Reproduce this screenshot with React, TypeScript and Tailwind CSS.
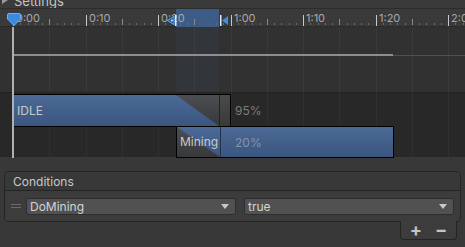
import React from "react";

const X0 = 13;
const MAJOR = 72.5;
const labels = ["0:00", "0:10", "0:20", "1:00", "1:10", "1:20", "2:00"];

function Ruler() {
  const ticks: { x: number; h: number; c: string }[] = [];
  for (let i = 0; i <= 64; i++) {
    const x = X0 + i * (MAJOR / 10);
    if (x > 465) break;
    if (i % 10 === 0) continue;
    if (i % 5 === 0) ticks.push({ x, h: 6, c: "#8a8a8a" });
    else ticks.push({ x, h: 2, c: "#6a6a6a" });
  }
  return (
    <div className="relative h-[18px] bg-[#3a3a3a] border-b border-[#2a2a2a]">
      <div className="absolute left-[176px] w-[43px] top-0 h-[18px] bg-[#3d5b87]" />
      {ticks.map((t, i) => (
        <div
          key={i}
          className="absolute w-px"
          style={{ left: Math.round(t.x), bottom: 1, height: t.h, background: t.c }}
        />
      ))}
      {labels.map((l, i) => {
        const x = Math.round(X0 + i * MAJOR);
        return (
          <div key={l} className="absolute top-[2px] h-[15px] flex items-end gap-[2px]" style={{ left: x }}>
            <div className="w-px h-[11px] bg-[#c8c8c8]" />
            <span className="text-[11px] leading-[14px] text-[#a8a8a8] self-start">{l}</span>
          </div>
        );
      })}
      {/* left marker */}
      <svg className="absolute left-[165px] top-[6px]" width="13" height="11" viewBox="0 0 13 11">
        <path d="M2.5 5.5 L9 1.5 L9 9.5 Z" fill="#1f3f66" stroke="#4aa0ff" strokeWidth="1.2" />
        <circle cx="7" cy="5.5" r="1.2" fill="#9fd0ff" />
        <rect x="10" y="0" width="1.5" height="11" fill="#d8e6f5" />
      </svg>
      {/* right marker */}
      <svg className="absolute left-[219px] top-[6px]" width="10" height="11" viewBox="0 0 10 11">
        <rect x="1" y="0" width="1.5" height="11" fill="#dfe9f5" />
        <path d="M3 5.5 L9 1 L9 10 Z" fill="#3a8ee6" />
      </svg>
      {/* playhead head */}
      <svg className="absolute left-[7px] top-[4px]" width="14" height="13" viewBox="0 0 14 13">
        <path
          d="M2 0.5 H12 Q13.5 0.5 13.5 2 V6 L7 12.5 L0.5 6 V2 Q0.5 0.5 2 0.5 Z"
          fill="#3a8ae2"
          stroke="#6cb1ff"
          strokeWidth="1"
        />
      </svg>
    </div>
  );
}

function GridLines({ color }: { color: string }) {
  const xs: number[] = [];
  for (let k = 1; k < 14; k++) {
    const x = X0 + k * (MAJOR / 2);
    if (x < 465) xs.push(Math.round(x));
  }
  return (
    <>
      {xs.map((x) => (
        <div key={x} className="absolute top-0 bottom-0 w-px" style={{ left: x, background: color }} />
      ))}
    </>
  );
}

function Diagonal({ id, down }: { id: string; down: boolean }) {
  return (
    <svg className="shrink-0 self-stretch" width="43" height="100%" viewBox="0 0 43 31" preserveAspectRatio="none">
      <defs>
        <linearGradient id={id + "b"} x1="0" y1="0" x2="0" y2="1">
          <stop offset="0" stopColor="#4b6a95" />
          <stop offset="1" stopColor="#3a5580" />
        </linearGradient>
        <linearGradient id={id + "g"} x1="0" y1="0" x2="0" y2="1">
          <stop offset="0" stopColor="#4c4e53" />
          <stop offset="1" stopColor="#37383b" />
        </linearGradient>
      </defs>
      <rect x="0" y="0" width="43" height="31" fill={`url(#${id}b)`} />
      <path d={down ? "M0 0 H43 V31 Z" : "M0 0 L43 31 H0 Z"} fill={`url(#${id}g)`} />
    </svg>
  );
}

function Timeline() {
  return (
    <div className="relative h-[149px] shrink-0">
      <Ruler />
      <div className="relative h-[66px] bg-[#313131] border-b border-[#242424]">
        <GridLines color="#3a3a3a" />
        <div className="absolute left-[176px] w-[43px] top-0 bottom-0 bg-[#3c5a88]/10" />
        <div className="absolute left-[13px] w-[380px] top-[27px] h-[2px] bg-[#8e8e8e]" />
        <div className="absolute left-[393px] right-0 top-[28px] h-px bg-[#505050]" />
      </div>
      <div className="relative h-[64px] bg-[#282828]">
        <GridLines color="#2f2f2f" />
        <div className="relative flex flex-col pt-[1px]">
          {/* IDLE row */}
          <div className="flex items-center h-[33px] pl-[13px]">
            <div className="flex h-full w-[218px] border border-black">
              <div className="flex-1 flex items-center pl-[3px] bg-gradient-to-b from-[#4b6a95] to-[#3a5580]">
                <span className="text-[12px] leading-[15px] text-[#c9c9c9]">IDLE</span>
              </div>
              <Diagonal id="idle" down />
              <div className="w-[11px] border-l border-[#222] bg-gradient-to-b from-[#4a4a4a] to-[#3a3a3a]" />
            </div>
            <span className="ml-[4px] text-[12px] leading-[15px] text-[#7d7d7d]">95%</span>
          </div>
          {/* Mining row */}
          <div className="flex h-[32px] -mt-px pl-[176px]">
            <div className="flex h-full w-[218px] border border-black">
              <div className="relative flex">
                <Diagonal id="mine" down={false} />
                <span className="absolute left-[3px] top-[7px] text-[12px] leading-[15px] text-[#c9c9c9]">Mining</span>
              </div>
              <div className="flex-1 flex items-center pl-[14px] border-l border-[#22304a] bg-gradient-to-b from-[#4b6a95] to-[#3a5580]">
                <span className="text-[12px] leading-[15px] text-[#8593a8]">20%</span>
              </div>
            </div>
          </div>
        </div>
      </div>
      <div className="absolute left-[12px] top-[18px] bottom-0 w-[2px] bg-[#b0b0b0]" />
    </div>
  );
}

function Dropdown({ label }: { label: string }) {
  return (
    <div className="flex-1 h-[17px] flex items-center justify-between rounded-[3px] border border-[#2e2e2e] bg-[#515151] pl-[3px] pr-[6px]">
      <span className="text-[12px] leading-[15px] text-[#d4d4d4]">{label}</span>
      <svg width="8" height="5" viewBox="0 0 8 5">
        <path d="M0 0 H8 L4 5 Z" fill="#c8c8c8" />
      </svg>
    </div>
  );
}

export default function App() {
  return (
    <div
      className="w-[465px] h-[247px] overflow-hidden bg-[#383838] flex flex-col"
      style={{ fontFamily: "Inter, 'Noto Sans', sans-serif" }}
    >
      <div className="h-[9px] shrink-0 overflow-hidden bg-[#3a3a3a] border-b border-[#2c2c2c] flex items-end gap-[6px] pl-[2px]">
        <svg className="mb-[4px]" width="6" height="8" viewBox="0 0 6 8">
          <path d="M0 0 L6 4 L0 8 Z" fill="#9a9a9a" />
        </svg>
        <span className="text-[13px] leading-[16px] -mb-[1px] text-[#c4c4c4] shrink-0">Settings</span>
      </div>
      <Timeline />
      <div className="mt-[13px] mx-[4px] flex flex-col">
        <div className="rounded-[4px] border border-[#242424] bg-[#3c3c3c] overflow-hidden">
          <div className="h-[19px] flex items-center pl-[8px] bg-[#383838] border-b border-[#242424]">
            <span className="text-[12px] leading-[15px] text-[#c8c8c8]">Conditions</span>
          </div>
          <div className="h-[30px] flex items-center px-[6px] bg-[#3c3c3c]">
            <div className="flex flex-col gap-[2px] w-[10px] mr-[5px]">
              <div className="h-px bg-[#6a6a6a]" />
              <div className="h-px bg-[#6a6a6a]" />
            </div>
            <div className="flex-1 flex gap-[8px]">
              <Dropdown label="DoMining" />
              <Dropdown label="true" />
            </div>
          </div>
        </div>
        <div className="self-end mr-[4px] -mt-px w-[57px] h-[19px] rounded-b-[4px] border border-t-0 border-[#242424] bg-[#3c3c3c] flex items-center justify-center gap-[13px] pb-[1px]">
          <span className="text-[18px] leading-[18px] font-bold text-[#c4c4c4]">+</span>
          <span className="text-[18px] leading-[18px] font-bold text-[#c4c4c4]">−</span>
        </div>
      </div>
    </div>
  );
}
